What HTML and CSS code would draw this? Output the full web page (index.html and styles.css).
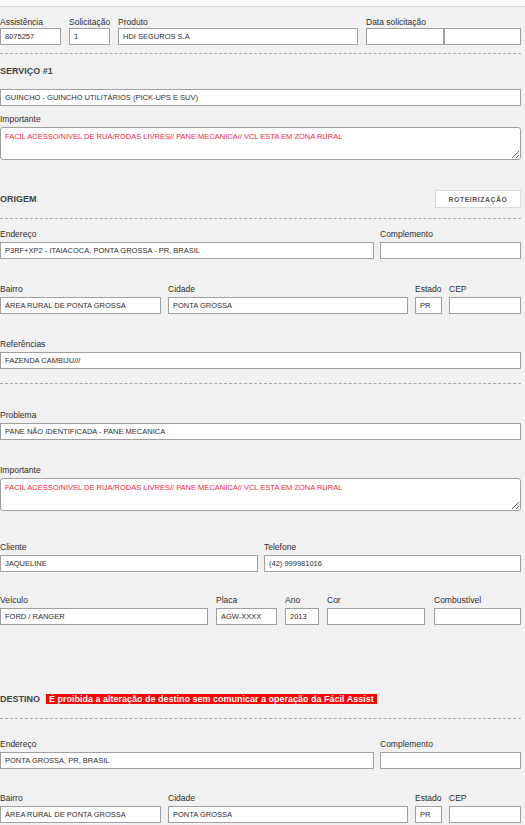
FILE: index.html
```html
<!DOCTYPE html>
<html lang="pt-BR">
<head>
    <meta charset="UTF-8">
    <meta name="viewport" content="width=device-width, initial-scale=1.0">
    <title>Atendimento</title>
    <link rel="stylesheet" href="styles.css">
</head>
<body>

<div class="topbar"></div>

<div class="form">
    <!-- Cabeçalho da solicitação -->
    <div class="row first">
        <div class="field w-assist">
            <label>Assistência</label>
            <input type="text" value="8075257">
        </div>
        <div class="field w-solic">
            <label>Solicitação</label>
            <input type="text" value="1">
        </div>
        <div class="field w-produto">
            <label>Produto</label>
            <input type="text" value="HDI SEGUROS S.A">
        </div>
        <div class="field w-data">
            <label>Data solicitação</label>
            <div class="pair">
                <input type="text" class="date-a" value="">
                <input type="text" class="date-b" value="">
            </div>
        </div>
    </div>

    <hr class="sep sep-1">

    <h3 class="title servico">SERVIÇO #1</h3>
    <input type="text" class="full servico-input" value="GUINCHO - GUINCHO UTILITÁRIOS (PICK-UPS E SUV)">

    <div class="field importante-1">
        <label>Importante</label>
        <textarea class="alert-text">FACIL ACESSO/NIVEL DE RUA/RODAS LIVRES// PANE MECANICA// VCL ESTA EM ZONA RURAL</textarea>
    </div>

    <!-- Origem -->
    <div class="section-head origem-head">
        <h3 class="title">ORIGEM</h3>
        <button class="btn-route">ROTEIRIZAÇÃO</button>
    </div>

    <hr class="sep sep-2">

    <div class="row gap6 after-sep">
        <div class="field w-end">
            <label>Endereço</label>
            <input type="text" value="P3RF+XP2 - ITAIACOCA, PONTA GROSSA - PR, BRASIL">
        </div>
        <div class="field w-compl">
            <label>Complemento</label>
            <input type="text" value="">
        </div>
    </div>

    <div class="row gap7">
        <div class="field w-bairro">
            <label>Bairro</label>
            <input type="text" value="ÁREA RURAL DE PONTA GROSSA">
        </div>
        <div class="field w-cidade">
            <label>Cidade</label>
            <input type="text" value="PONTA GROSSA">
        </div>
        <div class="field w-uf">
            <label>Estado</label>
            <input type="text" value="PR">
        </div>
        <div class="field w-cep">
            <label>CEP</label>
            <input type="text" value="">
        </div>
    </div>

    <div class="row">
        <div class="field w-full">
            <label>Referências</label>
            <input type="text" value="FAZENDA CAMBIJU///">
        </div>
    </div>

    <hr class="sep sep-3">

    <div class="row problema">
        <div class="field w-full">
            <label>Problema</label>
            <input type="text" value="PANE NÃO IDENTIFICADA - PANE MECANICA">
        </div>
    </div>

    <div class="row">
        <div class="field w-full">
            <label>Importante</label>
            <textarea class="alert-text">FACIL ACESSO/NIVEL DE RUA/RODAS LIVRES// PANE MECANICA// VCL ESTA EM ZONA RURAL</textarea>
        </div>
    </div>

    <div class="row gap6 cliente">
        <div class="field w-cliente">
            <label>Cliente</label>
            <input type="text" value="JAQUELINE">
        </div>
        <div class="field w-fone">
            <label>Telefone</label>
            <input type="text" value="(42) 999981016">
        </div>
    </div>

    <div class="row veiculo">
        <div class="field w-veic">
            <label>Veículo</label>
            <input type="text" value="FORD / RANGER">
        </div>
        <div class="field w-placa">
            <label>Placa</label>
            <input type="text" value="AGW-XXXX">
        </div>
        <div class="field w-ano">
            <label>Ano</label>
            <input type="text" value="2013">
        </div>
        <div class="field w-cor">
            <label>Cor</label>
            <input type="text" value="">
        </div>
        <div class="field w-comb">
            <label>Combustível</label>
            <input type="text" value="">
        </div>
    </div>

    <!-- Destino -->
    <div class="section-head destino-head">
        <h3 class="title">DESTINO</h3>
        <span class="warning">É proibida a alteração de destino sem comunicar a operação da Fácil Assist</span>
    </div>

    <hr class="sep sep-4">

    <div class="row gap6 destino-end">
        <div class="field w-end">
            <label>Endereço</label>
            <input type="text" value="PONTA GROSSA, PR, BRASIL">
        </div>
        <div class="field w-compl">
            <label>Complemento</label>
            <input type="text" value="">
        </div>
    </div>

    <div class="row gap7 destino-bairro">
        <div class="field w-bairro">
            <label>Bairro</label>
            <input type="text" value="ÁREA RURAL DE PONTA GROSSA">
        </div>
        <div class="field w-cidade">
            <label>Cidade</label>
            <input type="text" value="PONTA GROSSA">
        </div>
        <div class="field w-uf">
            <label>Estado</label>
            <input type="text" value="PR">
        </div>
        <div class="field w-cep">
            <label>CEP</label>
            <input type="text" value="">
        </div>
    </div>
</div>

</body>
</html>
```

FILE: styles.css
```css
body {
    margin: 0;
    padding: 0;
    background-color: #f1f1f1;
    font-family: "Liberation Sans", Arial, sans-serif;
    color: #333;
}
.topbar {
    height: 6px;
    background-color: #fafafa;
    border-bottom: 1px solid #dcdcdc;
}
.form {
    width: 521px;
}
/* Rows of fields */
.row {
    display: flex;
    gap: 8px;
    margin-top: 25px;
}
.row.first { margin-top: 10px; }
.row.gap6 { gap: 6px; }
.row.gap7 { gap: 7px; }
.row.after-sep { margin-top: 10px; }
.row.problema { margin-top: 26px; }
.row.cliente { margin-top: 31px; }
.row.veiculo { margin-top: 23px; }
.row.destino-end { margin-top: 20px; }
.row.destino-bairro { margin-top: 24px; }

.field label {
    display: block;
    font-size: 8.5px;
    line-height: 10px;
    margin-bottom: 3px;
    color: #2e2e2e;
    white-space: nowrap;
}
.first .field label {
    margin-bottom: 1px;
}
input {
    display: block;
    box-sizing: border-box;
    width: 100%;
    height: 17px;
    margin: 0;
    padding: 0 4px;
    border: 1px solid #a0a0a0;
    border-radius: 0;
    background-color: #fff;
    font-family: "Liberation Sans", Arial, sans-serif;
    font-size: 7.5px;
    color: #2e2e2e;
    outline: none;
}
textarea {
    display: block;
    box-sizing: border-box;
    width: 521px;
    height: 33px;
    margin: 0;
    padding: 4px 4px;
    border: 1px solid #a0a0a0;
    border-radius: 3px;
    background-color: #fff;
    font-family: "Liberation Sans", Arial, sans-serif;
    font-size: 7.5px;
    line-height: 9px;
    outline: none;
}
.alert-text {
    color: #f2234b;
}
/* Field widths */
.w-assist { width: 61px; }
.w-solic { width: 41px; }
.w-produto { width: 240px; }
.w-data { width: 155px; }
.pair { display: flex; }
.date-a { flex: 0 0 78px; }
.date-b { flex: 0 0 77px; }
.w-end { width: 374px; }
.w-compl { width: 141px; }
.w-bairro { width: 161px; }
.w-cidade { width: 240px; }
.w-uf { width: 27px; }
.w-cep { width: 72px; }
.w-full { width: 521px; }
.w-cliente { width: 258px; }
.w-fone { width: 257px; }
.w-veic { width: 208px; }
.w-placa { width: 61px; }
.w-ano { width: 34px; }
.w-cor { width: 98px; }
.w-comb { width: 87px; margin-left: 1px; }

/* Dashed separators */
.sep {
    border: 0;
    border-top: 1px dashed #a8a8a8;
    margin: 0;
    height: 0;
}
.sep-1 { margin-top: 8px; }
.sep-2 { margin-top: 10px; }
.sep-3 { margin-top: 14px; }
.sep-4 { margin-top: 13px; }

/* Section titles */
.title {
    margin: 0;
    font-size: 9px;
    line-height: 12px;
    font-weight: bold;
    color: #444;
}
.servico { margin-top: 11px; }
.servico-input { margin-top: 12px; }
.full { width: 521px; }
.importante-1 { margin-top: 8px; }

.section-head {
    display: flex;
    align-items: center;
}
.origem-head {
    justify-content: space-between;
    margin-top: 30px;
}
.btn-route {
    box-sizing: border-box;
    width: 86px;
    height: 18px;
    padding: 0;
    background-color: #fff;
    border: 1px solid #dcdcdc;
    font-family: "Liberation Sans", Arial, sans-serif;
    font-size: 6.8px;
    font-weight: bold;
    letter-spacing: 0.6px;
    color: #555;
    cursor: pointer;
}
.destino-head {
    gap: 6px;
    margin-top: 68px;
}
.warning {
    background-color: #ff0000;
    color: #fff;
    font-size: 9px;
    font-weight: bold;
    line-height: 10px;
    padding: 0 3px;
    white-space: nowrap;
}
```
